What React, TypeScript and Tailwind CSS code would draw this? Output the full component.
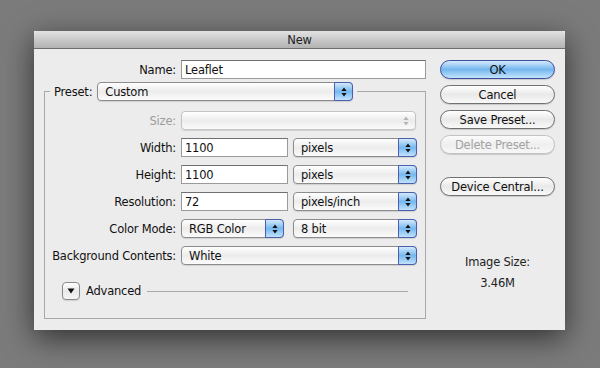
import React from "react";

const Arrows = ({ color = "#111" }: { color?: string }) => (
  <svg width="6" height="10" viewBox="0 0 6 10" fill={color}>
    <path d="M3 0.5L5.6 4H0.4Z" />
    <path d="M3 9.5L5.6 6H0.4Z" />
  </svg>
);

const Popup = ({ text, w, disabled }: { text?: string; w: string; disabled?: boolean }) => (
  <div
    className={`${w} h-[19px] flex items-stretch rounded-[4px] border ${
      disabled ? "border-[#c4c4c4]" : "border-[#8c8c8c]"
    } bg-gradient-to-b from-[#ffffff] via-[#ececec] to-[#fbfbfb] shadow-[0_1px_1px_rgba(0,0,0,0.12)]`}
  >
    <div className="flex-1 flex items-center pl-[7px] text-[#111]">{text}</div>
    {disabled ? (
      <div className="w-[18px] flex items-center justify-center">
        <Arrows color="#b5b5b5" />
      </div>
    ) : (
      <div className="w-[19px] -my-px -mr-px flex items-center justify-center rounded-r-[4px] border border-[#4b5fb0] bg-gradient-to-b from-[#d3e9fc] via-[#76b8ef] to-[#c0e2fb]">
        <Arrows />
      </div>
    )}
  </div>
);

const TextField = ({ value, w }: { value: string; w: string }) => (
  <div
    className={`${w} h-[19px] flex items-center pl-[3px] bg-white border border-[#9a9a9a] border-t-[#6f6f6f] text-[#111]`}
  >
    {value}
  </div>
);

const Button = ({ label, primary, disabled }: { label: string; primary?: boolean; disabled?: boolean }) => (
  <div
    className={`h-[19px] flex items-center justify-center rounded-full border ${
      primary
        ? "border-[#3a4f9c] bg-gradient-to-b from-[#d6ebfc] via-[#74b6ee] to-[#c4e4fb] text-[#111]"
        : disabled
        ? "border-[#c2c2c2] bg-gradient-to-b from-[#fbfbfb] via-[#efefef] to-[#f7f7f7] text-[#a3a3a3]"
        : "border-[#707070] bg-gradient-to-b from-[#ffffff] via-[#e9e9e9] to-[#f9f9f9] text-[#111]"
    } shadow-[0_1px_1px_rgba(0,0,0,0.15)]`}
  >
    {label}
  </div>
);

const Row = ({ label, children, dim }: { label: string; children: React.ReactNode; dim?: boolean }) => (
  <div className="flex items-center h-[19px]">
    <div className={`w-[126px] text-right ${dim ? "text-[#9c9c9c]" : "text-[#111]"}`}>{label}</div>
    <div className="ml-[5px] flex items-center gap-[5px]">{children}</div>
  </div>
);

export default function App() {
  return (
    <div className="w-[600px] h-[368px] bg-[#7b7b7b] pt-[31px] pl-[34px] font-['DejaVu_Sans',sans-serif] text-[11.5px] tracking-[-0.2px] leading-[14px]">
      <div className="w-[531px] h-[299px] flex flex-col bg-[#ececec] shadow-[0_8px_28px_rgba(0,0,0,0.6)]">
        <div className="h-[18px] flex items-center justify-center bg-gradient-to-b from-[#e2e2e2] to-[#b2b2b2] border-b border-[#6e6e6e] text-[#222] rounded-t-[4px]">
          New
        </div>
        <div className="flex flex-1 pl-[10px] pt-[11px]">
          <div className="w-[382px] flex flex-col">
            <div className="flex items-center h-[19px]">
              <div className="w-[132px] text-right text-[#111]">Name:</div>
              <div className="ml-[5px]">
                <TextField value="Leaflet" w="w-[245px]" />
              </div>
            </div>
            <fieldset className="mt-[3px] border border-[#a8a8a8] pl-[5px] pb-[18px]">
              <legend className="px-[4px]">
                <div className="flex items-center">
                  <span className="text-[#111]">Preset:</span>
                  <div className="ml-[5px]">
                    <Popup text="Custom" w="w-[256px]" />
                  </div>
                </div>
              </legend>
              <div className="mt-[10px] flex flex-col gap-[8px]">
                <Row label="Size:" dim>
                  <Popup w="w-[235px]" disabled />
                </Row>
                <Row label="Width:">
                  <TextField value="1100" w="w-[107px]" />
                  <Popup text="pixels" w="w-[124px]" />
                </Row>
                <Row label="Height:">
                  <TextField value="1100" w="w-[107px]" />
                  <Popup text="pixels" w="w-[124px]" />
                </Row>
                <Row label="Resolution:">
                  <TextField value="72" w="w-[107px]" />
                  <Popup text="pixels/inch" w="w-[124px]" />
                </Row>
                <Row label="Color Mode:">
                  <Popup text="RGB Color" w="w-[103px]" />
                  <div className="ml-[4px]">
                    <Popup text="8 bit" w="w-[124px]" />
                  </div>
                </Row>
                <Row label="Background Contents:">
                  <Popup text="White" w="w-[236px]" />
                </Row>
              </div>
              <div className="mt-[17px] flex items-center pl-[12px] h-[18px]">
                <div className="w-[18px] h-[18px] flex items-center justify-center rounded-[4px] border border-[#8a8a8a] bg-gradient-to-b from-[#ffffff] via-[#e8e8e8] to-[#f6f6f6] shadow-[0_1px_1px_rgba(0,0,0,0.12)]">
                  <svg width="8" height="6" viewBox="0 0 8 6">
                    <path d="M0.5 0.5H7.5L4 5.5Z" fill="#111" />
                  </svg>
                </div>
                <span className="ml-[6px] text-[#111]">Advanced</span>
                <div className="flex-1 ml-[6px] mr-[17px] h-px bg-[#a9a9a9]" />
              </div>
            </fieldset>
          </div>
          <div className="ml-[14px] w-[115px] flex flex-col">
            <div className="flex flex-col gap-[6px]">
              <Button label="OK" primary />
              <Button label="Cancel" />
              <Button label="Save Preset..." />
              <Button label="Delete Preset..." disabled />
            </div>
            <div className="mt-[23px]">
              <Button label="Device Central..." />
            </div>
            <div className="mt-[59px] text-center text-[#222]">Image Size:</div>
            <div className="mt-[7px] text-center text-[#222]">3.46M</div>
          </div>
        </div>
      </div>
    </div>
  );
}
